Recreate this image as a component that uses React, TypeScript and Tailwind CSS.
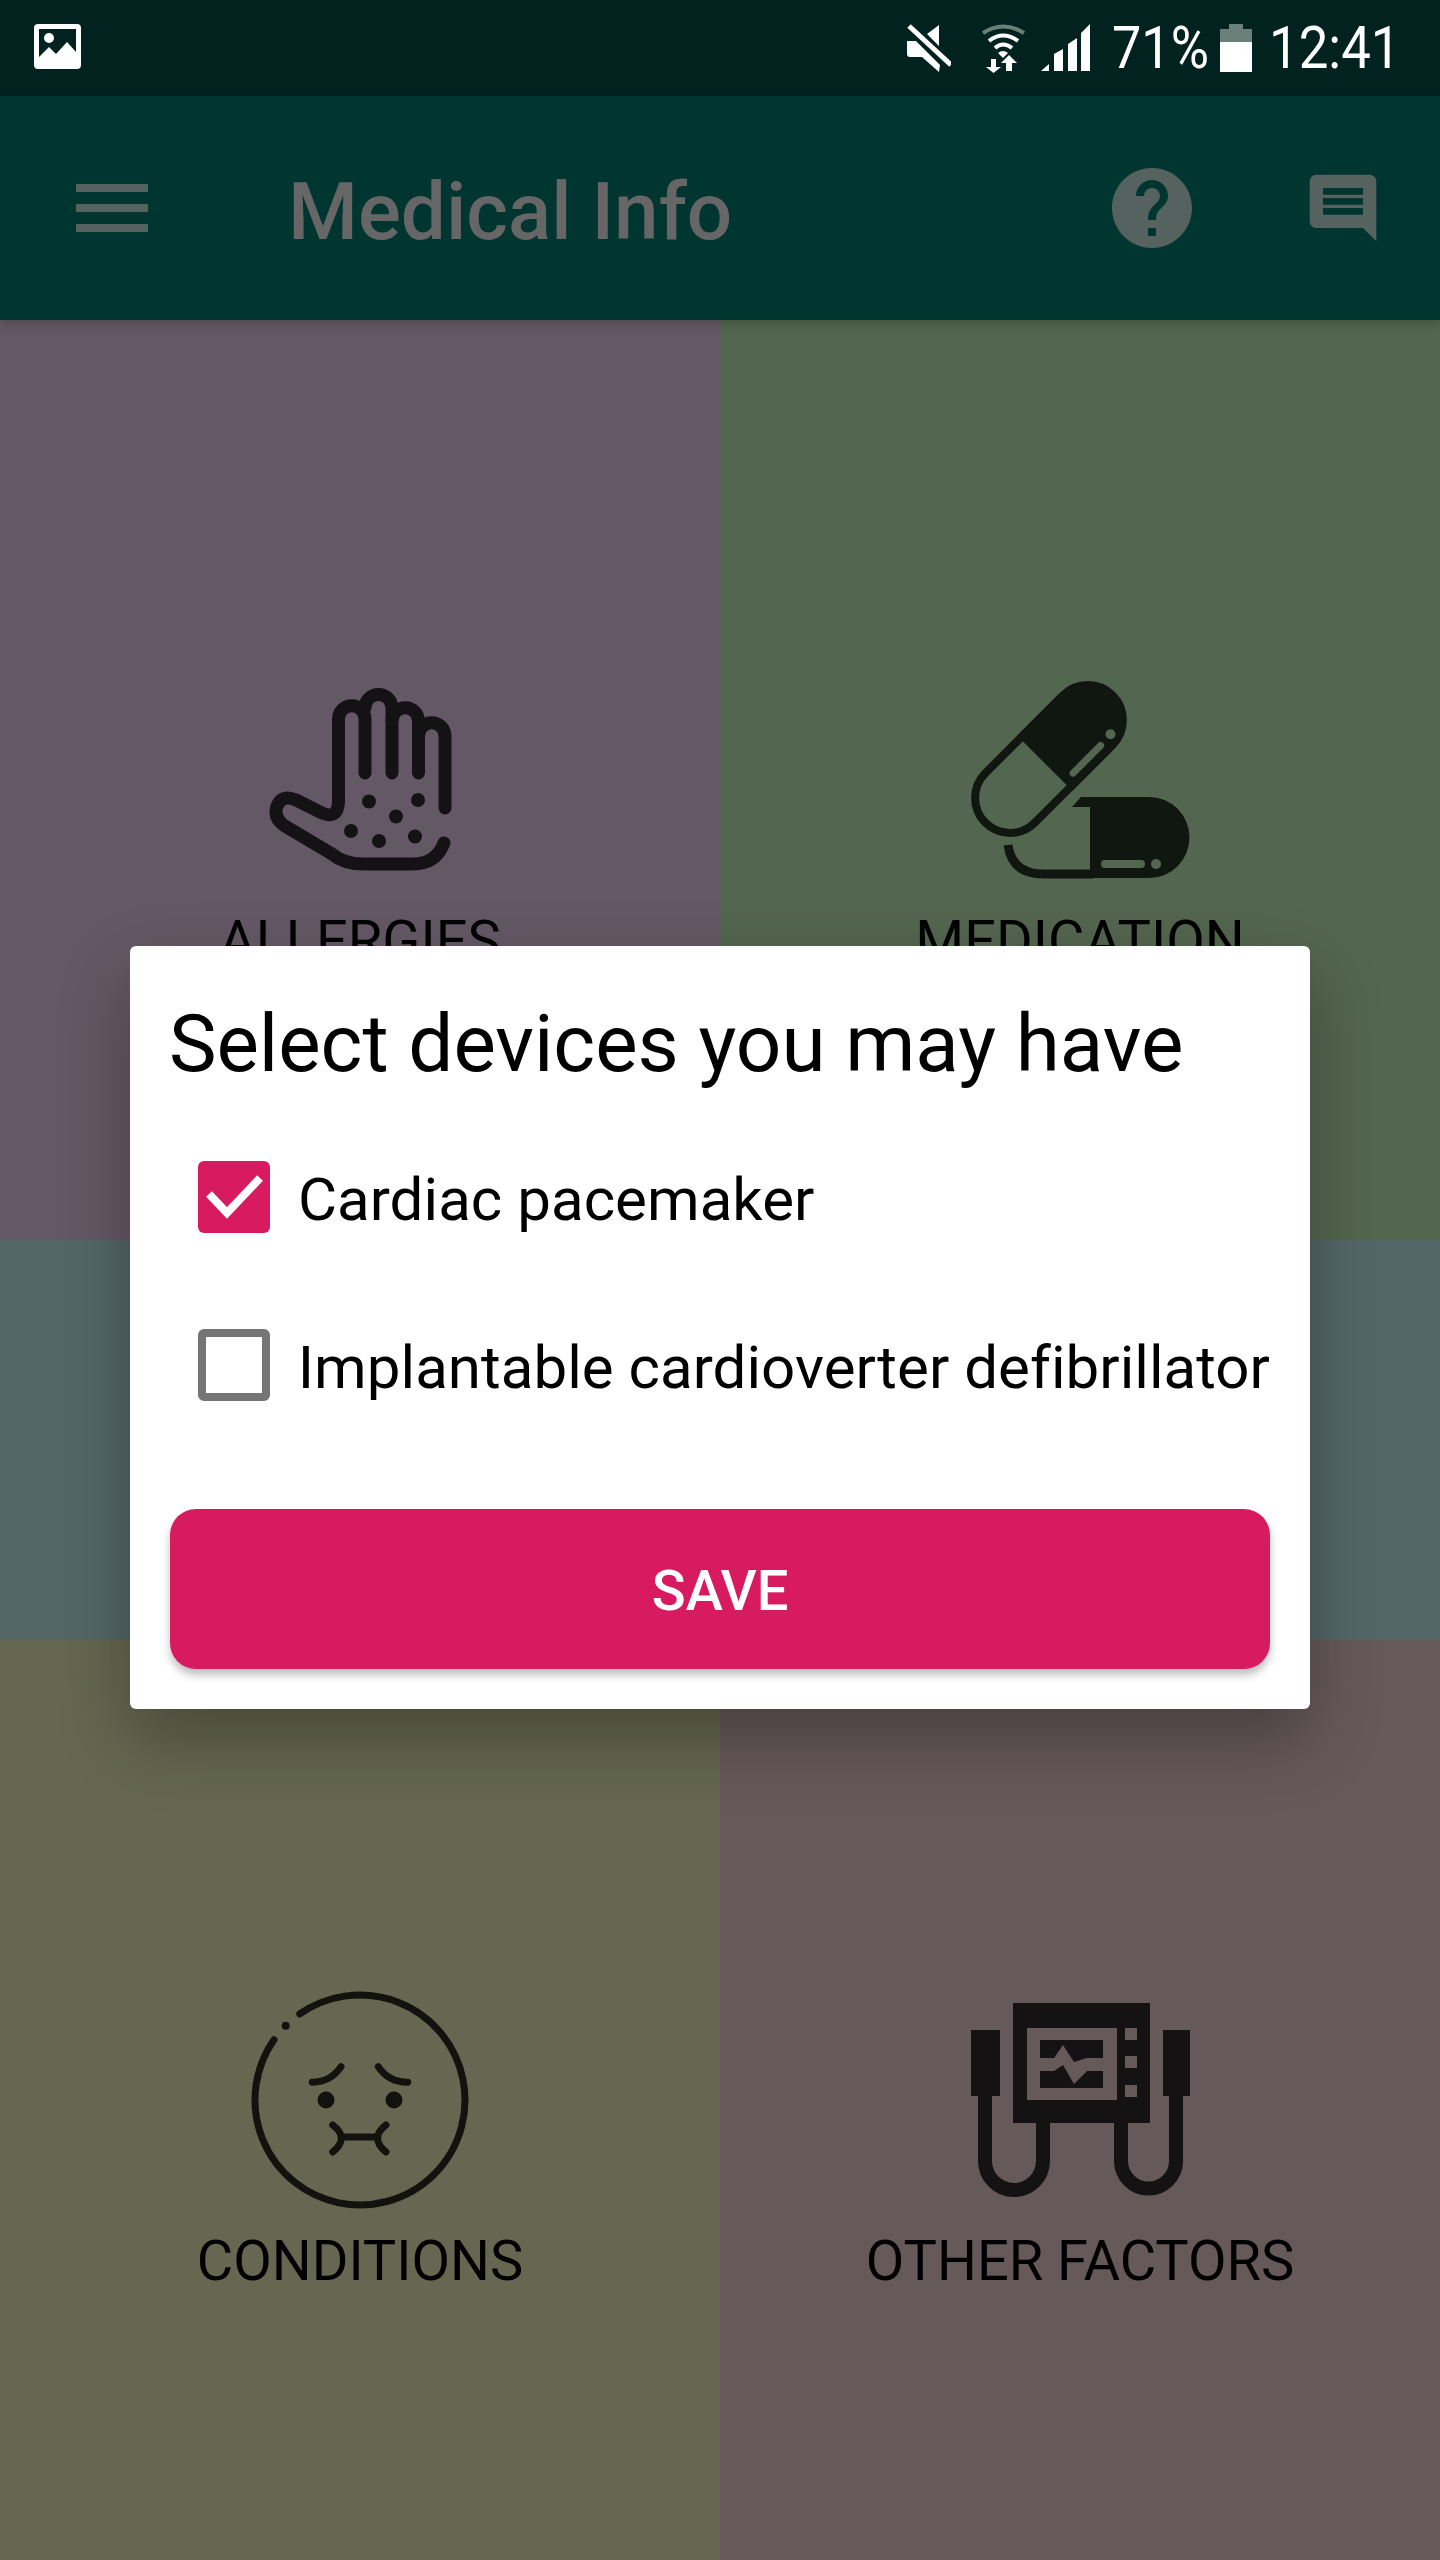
const font = "font-['Roboto',sans-serif]"

function ImageIcon() {
  return (
    <svg width="47" height="45" viewBox="0 0 47 45" className="ml-[34px] mb-[3px]">
      <path fillRule="evenodd" fill="#fff" d="M4 0H43A4 4 0 0 1 47 4V41A4 4 0 0 1 43 45H4A4 4 0 0 1 0 41V4A4 4 0 0 1 4 0ZM5 5V33L15 23L22 30L33 18L42 28V5Z" />
      <circle cx="15" cy="14" r="5" fill="#fff" />
    </svg>
  )
}

function MuteIcon() {
  return (
    <svg width="44" height="48" viewBox="0 0 44 48">
      <path fill="#fff" d="M32 1V22L20 10ZM0 17H9L33 41L32 48L15 33H3A3 3 0 0 1 0 30Z" />
      <path stroke="#fff" strokeWidth="5" d="M2 2L44 41" />
    </svg>
  )
}

function WifiIcon() {
  return (
    <svg width="43" height="49" viewBox="0 0 43 49" fill="none">
      <path stroke="#6a7f78" strokeWidth="4" d="M1 9Q21 -4 42 9" />
      <path stroke="#fff" strokeWidth="4" d="M7 17Q21 6 36 17M13 24Q21 17 30 24" />
      <path fill="#fff" d="M16 29Q21 25 26 29L21 34Z" />
      <path fill="#fff" d="M9 35H14V43H19L11.500 49L4 43H9ZM27 31L35 39H30V47H24V39H19Z" />
    </svg>
  )
}

function SignalIcon() {
  return (
    <svg width="49" height="48" viewBox="0 0 49 48">
      <path fill="#fff" d="M0 47L8 40V47ZM13 30L22 25V47H13ZM27 20L36 14V47H27ZM40 9L49 0V47H40Z" />
    </svg>
  )
}

function BatteryIcon() {
  return (
    <svg width="32" height="48" viewBox="0 0 32 48">
      <path fill="#6a7f78" d="M9 0H23V5H32V18H0V5H9Z" />
      <rect y="18" width="32" height="30" fill="#fff" />
    </svg>
  )
}

function HandIcon() {
  return (
    <svg width="185" height="185" viewBox="0 0 185 185" fill="none" stroke="#141215" strokeWidth="13" strokeLinecap="round">
      <path d="M70.500 113V31a13.250 13.250 0 0 1 26.500 0V85" />
      <path d="M97 20a13.500 13.500 0 0 1 27 0V85" />
      <path d="M124 33a13.250 13.250 0 0 1 26.500 0V85" />
      <path d="M150.500 48a13.250 13.250 0 0 1 26.500 0V120" />
      <path d="M70.500 113Q70 133 52 124L28 112Q14 106 9 118Q5 130 17 138L64 166Q76 176 95 176H145Q168 176 176 155" />
      <g fill="#141215" stroke="none">
        <circle cx="101" cy="113.500" r="7" />
        <circle cx="150" cy="112" r="7" />
        <circle cx="128" cy="128.500" r="7" />
        <circle cx="83" cy="143" r="7" />
        <circle cx="111" cy="153" r="7" />
        <circle cx="147" cy="148.500" r="7" />
      </g>
    </svg>
  )
}

function PillIcon() {
  const ink = "#101610"
  const bg = "#53664f"
  return (
    <svg width="219" height="200" viewBox="0 0 219 200" fill="none">
      <g transform="translate(78 79) rotate(45)">
        <rect x="-35" y="-90" width="70" height="180" rx="35" stroke={ink} strokeWidth="8" />
        <path fill={ink} d="M-39 6V-51A39 39 0 0 1 39 -51V6Z" />
        <path stroke={bg} strokeWidth="7" strokeLinecap="round" d="M27 -7V-46" />
        <circle cx="26" cy="-61" r="5" fill={bg} />
      </g>
      <path fill={ink} d="M110 117H178A40.500 40.500 0 0 1 178 198H119V127H101Z" />
      <path stroke={ink} strokeWidth="9" d="M37 165Q41 194 72 194H122" />
      <path stroke={bg} strokeWidth="8" strokeLinecap="round" d="M134 184H170" />
      <circle cx="185" cy="184" r="5" fill={bg} />
    </svg>
  )
}

function FaceIcon() {
  const ink = "#12130e"
  return (
    <svg width="218" height="218" viewBox="0 0 218 218" fill="none" stroke={ink} strokeWidth="7" strokeLinecap="round">
      <path d="M48.770 22.990A105 105 0 1 1 22.990 48.770" />
      <circle cx="34.700" cy="34.700" r="4" fill={ink} stroke="none" />
      <path d="M90 75.700Q80 91 61.300 91.300M127.300 75.700Q137 91 156.700 91.300" />
      <circle cx="75" cy="109" r="8.500" fill={ink} stroke="none" />
      <circle cx="143" cy="109" r="8.500" fill={ink} stroke="none" />
      <path d="M81.700 134Q99 147 81.700 161M135 134Q118 147 135 161M90 146H127" />
    </svg>
  )
}

function DefibIcon() {
  const ink = "#141213"
  const bg = "#665959"
  return (
    <svg width="219" height="194" viewBox="0 0 219 194" fill="none">
      <path stroke={ink} strokeWidth="14" d="M14 90V158A29 29 0 0 0 72 158V115M150 115V158A27.500 27.500 0 0 0 205 158V90" />
      <rect x="42" width="137" height="120" fill={ink} />
      <rect y="27" width="29" height="66" fill={ink} />
      <rect x="192" y="27" width="27" height="66" fill={ink} />
      <rect x="56" y="25" width="90" height="72" fill={bg} />
      <rect x="69" y="37" width="63" height="48" fill={ink} />
      <polygon fill={bg} points="69,55 83,55 92,42 103,59 116,55 132,55 132,68 116,68 103,81 92,62 83,68 69,68" />
      <rect x="154" y="25" width="12" height="12" fill={bg} />
      <rect x="154" y="53" width="12" height="12" fill={bg} />
      <rect x="154" y="82" width="12" height="12" fill={bg} />
    </svg>
  )
}

function Tile({ bg, label, icon }: { bg: string; label?: string; icon?: React.ReactNode }) {
  return (
    <div className={`${bg} flex flex-col items-center pt-[350px] overflow-hidden`}>
      {icon && <div className="h-[220px] flex items-center justify-center">{icon}</div>}
      {label && <div className="mt-[21px] text-[56px] leading-[60px] text-black whitespace-nowrap">{label}</div>}
    </div>
  )
}

function DeviceRow({ label, checked }: { label: string; checked?: boolean }) {
  return (
    <div className="flex items-center h-[72px] pl-[28px]">
      {checked ? (
        <div className="w-[72px] h-[72px] rounded-[6px] bg-[#d81b60]">
          <svg width="72" height="72" viewBox="0 0 72 72" fill="none">
            <path stroke="#fff" strokeWidth="8" d="M11 33L29 52L62 17" />
          </svg>
        </div>
      ) : (
        <div className="w-[72px] h-[72px] rounded-[6px] border-[8px] border-[#757575]" />
      )}
      <span className="ml-[28px] pt-[6px] text-[60px] leading-[72px] tracking-[0.05px] text-black whitespace-nowrap">{label}</span>
    </div>
  )
}

export default function App() {
  return (
    <div className={`relative w-[1440px] h-[2560px] overflow-hidden ${font}`}>
      <div className="h-[96px] bg-[#01221e] flex items-center text-white">
        <ImageIcon />
        <div className="ml-auto flex items-center pr-[44px]">
          <MuteIcon />
          <div className="ml-[31px]"><WifiIcon /></div>
          <div className="ml-[16px]"><SignalIcon /></div>
          <span className="ml-[22px] w-[95px] text-[60px] leading-[72px] scale-x-[0.87] origin-left whitespace-nowrap">71%</span>
          <div className="ml-[13px]"><BatteryIcon /></div>
          <span className="ml-[17px] w-[127px] text-[60px] leading-[72px] scale-x-[0.88] origin-left whitespace-nowrap">12:41</span>
        </div>
      </div>

      <div className="relative z-10 h-[224px] bg-[#013630] flex items-center shadow-[0_4px_10px_rgba(0,0,0,0.2)]">
        <div className="ml-[76px] w-[72px] flex flex-col gap-[12px]">
          <div className="h-[8px] bg-[#56625f]" />
          <div className="h-[8px] bg-[#56625f]" />
          <div className="h-[8px] bg-[#56625f]" />
        </div>
        <span className="ml-[140px] pt-[7px] text-[80px] leading-[96px] font-medium text-[#666666]">Medical Info</span>
        <svg width="96" height="96" viewBox="0 0 24 24" fill="#56625f" className="ml-auto">
          <path d="M12 2C6.480 2 2 6.480 2 12s4.480 10 10 10 10-4.480 10-10S17.520 2 12 2zm1 17h-2v-2h2v2zm2.070-7.750l-.9.920C13.450 12.900 13 13.500 13 15h-2v-.5c0-1.100.45-2.100 1.170-2.830l1.240-1.260c.37-.36.59-.86.59-1.410 0-1.100-.9-2-2-2s-2 .9-2 2H8c0-2.210 1.790-4 4-4s4 1.790 4 4c0 .88-.36 1.680-.93 2.250z" />
        </svg>
        <svg width="80" height="80" viewBox="0 0 24 24" fill="#56625f" className="ml-[103px] mr-[57px] -scale-x-100">
          <path d="M20 2H4c-1.100 0-1.990.9-1.990 2L2 22l4-4h14c1.100 0 2-.9 2-2V4c0-1.100-.9-2-2-2zM6 6h12v2H6V6zm0 3h12v2H6V9zm0 3h12v2H6v-2z" />
        </svg>
      </div>

      <div className="grid grid-cols-2 grid-rows-[920px_400px_920px]">
        <Tile bg="bg-[#655866]" label="ALLERGIES" icon={<HandIcon />} />
        <Tile bg="bg-[#53664f]" label="MEDICATION" icon={<PillIcon />} />
        <div className="bg-[#546666]" />
        <div className="bg-[#546666]" />
        <Tile bg="bg-[#666750]" label="CONDITIONS" icon={<FaceIcon />} />
        <Tile bg="bg-[#665959]" label="OTHER FACTORS" icon={<DefibIcon />} />
      </div>

      {/* dialog sits over the scrimmed screen, centred below the status bar */}
      <div className="absolute z-20 inset-x-0 top-[95px] bottom-0 flex items-center justify-center">
        <div className="w-[1180px] bg-white rounded-[6px] px-[40px] pt-[50px] pb-[40px] shadow-[0_30px_70px_rgba(0,0,0,0.3)]">
          <div className="-ml-[1px] text-[80px] leading-[96px] tracking-[-0.05px] text-black whitespace-nowrap">Select devices you may have</div>
          <div className="mt-[69px] flex flex-col gap-[96px]">
            <DeviceRow label="Cardiac pacemaker" checked />
            <DeviceRow label="Implantable cardioverter defibrillator" />
          </div>
          <button className="mt-[108px] w-full h-[160px] pt-[3px] rounded-[26px] bg-[#d81b60] text-white text-[56px] font-medium shadow-[0_6px_8px_rgba(0,0,0,0.25)]">
            SAVE
          </button>
        </div>
      </div>
    </div>
  )
}
